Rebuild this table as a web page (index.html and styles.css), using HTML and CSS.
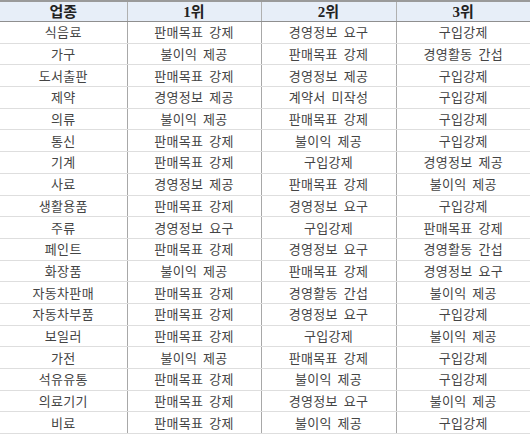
FILE: index.html
```html
<!DOCTYPE html>
<html lang="ko">
<head>
<meta charset="utf-8">
<link rel="stylesheet" href="styles.css">
</head>
<body>
<table class="rank">
  <colgroup>
    <col class="c1"><col class="c2"><col class="c3"><col class="c4">
  </colgroup>
  <thead>
    <tr><th>업종</th><th>1위</th><th>2위</th><th>3위</th></tr>
  </thead>
  <tbody>
    <tr><td>식음료</td><td>판매목표 강제</td><td>경영정보 요구</td><td>구입강제</td></tr>
    <tr><td>가구</td><td>불이익 제공</td><td>판매목표 강제</td><td>경영활동 간섭</td></tr>
    <tr><td>도서출판</td><td>판매목표 강제</td><td>경영정보 제공</td><td>구입강제</td></tr>
    <tr><td>제약</td><td>경영정보 제공</td><td>계약서 미작성</td><td>구입강제</td></tr>
    <tr><td>의류</td><td>불이익 제공</td><td>판매목표 강제</td><td>구입강제</td></tr>
    <tr><td>통신</td><td>판매목표 강제</td><td>불이익 제공</td><td>구입강제</td></tr>
    <tr><td>기계</td><td>판매목표 강제</td><td>구입강제</td><td>경영정보 제공</td></tr>
    <tr><td>사료</td><td>경영정보 제공</td><td>판매목표 강제</td><td>불이익 제공</td></tr>
    <tr><td>생활용품</td><td>판매목표 강제</td><td>경영정보 요구</td><td>구입강제</td></tr>
    <tr><td>주류</td><td>경영정보 요구</td><td>구입강제</td><td>판매목표 강제</td></tr>
    <tr><td>페인트</td><td>판매목표 강제</td><td>경영정보 요구</td><td>경영활동 간섭</td></tr>
    <tr><td>화장품</td><td>불이익 제공</td><td>판매목표 강제</td><td>경영정보 요구</td></tr>
    <tr><td>자동차판매</td><td>판매목표 강제</td><td>경영활동 간섭</td><td>불이익 제공</td></tr>
    <tr><td>자동차부품</td><td>판매목표 강제</td><td>경영정보 요구</td><td>구입강제</td></tr>
    <tr><td>보일러</td><td>판매목표 강제</td><td>구입강제</td><td>불이익 제공</td></tr>
    <tr><td>가전</td><td>불이익 제공</td><td>판매목표 강제</td><td>구입강제</td></tr>
    <tr><td>석유유통</td><td>판매목표 강제</td><td>불이익 제공</td><td>구입강제</td></tr>
    <tr><td>의료기기</td><td>판매목표 강제</td><td>경영정보 요구</td><td>불이익 제공</td></tr>
    <tr><td>비료</td><td>판매목표 강제</td><td>불이익 제공</td><td>구입강제</td></tr>
  </tbody>
</table>
</body>
</html>
```

FILE: styles.css
```css
html, body {
  margin: 0;
  padding: 0;
  background: #ffffff;
}

.rank {
  width: 530px;
  border-collapse: collapse;
  table-layout: fixed;
  font-family: "Noto Sans CJK KR", "Noto Sans", sans-serif;
  color: #444;
}

.c1 { width: 127px; }
.c2 { width: 134px; }
.c3 { width: 135px; }
.c4 { width: 134px; }

.rank th {
  height: 19px;
  padding: 0;
  background: #e7eef8;
  border-top: 2px solid #9a9a9a;
  border-bottom: 1px solid #8f8f8f;
  border-left: 1px solid #b0b0b0;
  font-family: "Liberation Serif", "Noto Sans CJK KR", serif;
  font-size: 15px;
  font-weight: 700;
  color: #222;
  text-align: center;
  vertical-align: middle;
  line-height: 18px;
}

.rank td {
  height: 20.7px;
  padding: 0;
  border-bottom: 1px solid #dedede;
  border-left: 1px solid #a8a8a8;
  font-size: 13px;
  text-align: center;
  vertical-align: middle;
  line-height: 16px;
  letter-spacing: 0.3px;
  word-spacing: 2px;
}

.rank th:first-child,
.rank td:first-child {
  border-left: none;
}
```
